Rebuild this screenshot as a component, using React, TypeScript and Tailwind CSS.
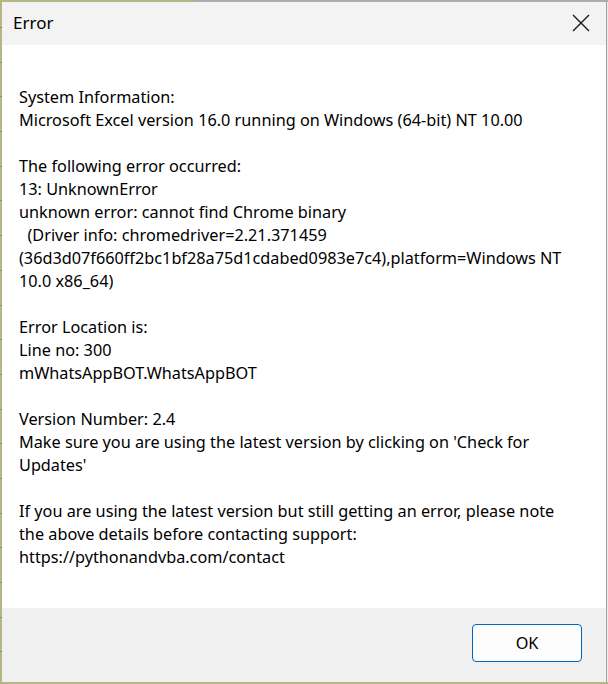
import React from "react";

const font = { fontFamily: '"Noto Sans", "Open Sans", sans-serif' };

const lines: string[] = [
  "System Information:",
  "Microsoft Excel version 16.0 running on Windows (64-bit) NT 10.00",
  "",
  "The following error occurred:",
  "13: UnknownError",
  "unknown error: cannot find Chrome binary",
  "  (Driver info: chromedriver=2.21.371459",
  "(36d3d07f660ff2bc1bf28a75d1cdabed0983e7c4),platform=Windows NT",
  "10.0 x86_64)",
  "",
  "Error Location is:",
  "Line no: 300",
  "mWhatsAppBOT.WhatsAppBOT",
  "",
  "Version Number: 2.4",
  "Make sure you are using the latest version by clicking on 'Check for",
  "Updates'",
  "",
  "If you are using the latest version but still getting an error, please note",
  "the above details before contacting support:",
  "https://pythonandvba.com/contact",
];

function GridStrip({ offset, color }: { offset: number; color: string }) {
  const rows = Array.from({ length: 21 });
  return (
    <div className={`flex flex-col w-[2px] ${color}`}>
      <div style={{ height: offset }} className="shrink-0 border-b border-[#8a8a7a]" />
      {rows.map((_, i) => (
        <div key={i} className="h-[34.7px] shrink-0 border-b border-[#8a8a7a]" />
      ))}
    </div>
  );
}

export default function App() {
  return (
    <div className="w-[608px] h-[684px] bg-[#b7b583] flex flex-col overflow-hidden" style={font}>
      <div className="h-[2px] flex shrink-0">
        <div className="w-[195px] bg-[#b7b583]" />
        <div className="flex-1 bg-[#adadad]" />
      </div>
      <div className="flex flex-1 min-h-0">
        <div className="w-[2px] overflow-hidden bg-[#b7b583]">
          <GridStrip offset={26} color="bg-[#b7b583]" />
        </div>
        <div className="w-[604px] flex flex-col">
          <div className="h-[43px] bg-[#f3f3f3] flex items-center justify-between pl-[11px] pr-[16px] shrink-0">
            <span className="text-[17px] text-black leading-none -mt-[2px]">Error</span>
            <svg width="18" height="18" viewBox="0 0 18 18" className="-mt-[1px]">
              <path d="M1 1 L17 17 M17 1 L1 17" stroke="#1a1a1a" strokeWidth="1.4" fill="none" />
            </svg>
          </div>
          <div className="flex-1 bg-white pt-[41px] pl-[17px] text-[16.25px] leading-[23px] text-black">
            {lines.map((l, i) => (
              <div key={i} className="whitespace-pre h-[23px]">
                {l}
              </div>
            ))}
          </div>
          <div className="h-[74px] bg-[#f0f0f0] shrink-0 flex items-start justify-end pt-[16px] pr-[24px]">
            <button className="w-[110px] h-[38px] rounded-[4px] border-[1.5px] border-[#0067c0] bg-[#fdfdfd] text-[16.25px] text-black">
              OK
            </button>
          </div>
        </div>
        <div className="w-[2px] flex overflow-hidden">
          <div className="w-[1px] bg-[#a0a0a0]" />
          <div className="w-[1px] bg-[#ececec]" />
        </div>
      </div>
      <div className="h-[2px] bg-[#b7b583] shrink-0" />
    </div>
  );
}
